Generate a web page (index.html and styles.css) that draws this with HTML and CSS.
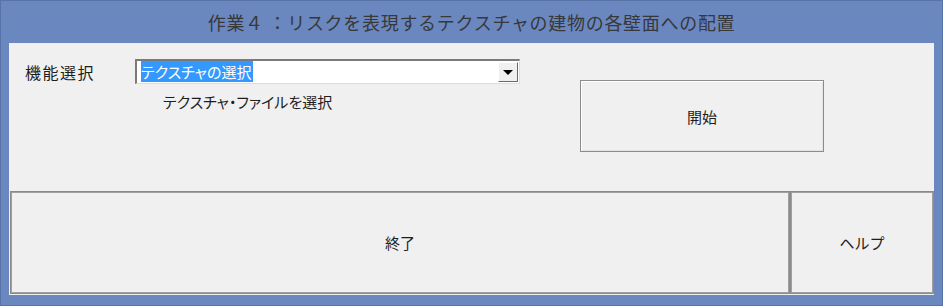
FILE: index.html
```html
<!DOCTYPE html>
<html lang="ja">
<head>
  <meta charset="UTF-8">
  <title>作業４：リスクを表現するテクスチャの建物の各壁面への配置</title>
  <link rel="stylesheet" href="styles.css">
</head>
<body>
  <div class="window">
    <div class="titlebar">作業４ ：リスクを表現するテクスチャの建物の各壁面への配置</div>
    <div class="client">
      <div class="top">
        <div class="form">
          <div class="row">
            <span class="label">機能選択</span>
            <div class="combo">
              <span class="combo-text"><span class="selected">テクスチャの選択</span></span>
              <span class="combo-btn"><span class="arrow"></span></span>
            </div>
          </div>
          <div class="hint">テクスチャ・ファイルを選択</div>
        </div>
        <button class="btn start">開始</button>
      </div>
      <div class="bottom">
        <button class="btn exit">終了</button>
        <button class="btn help">ヘルプ</button>
      </div>
    </div>
  </div>
</body>
</html>
```

FILE: styles.css
```css
body {
  margin: 0;
  background-color: #6a87c0;
  font-family: "Noto Sans CJK JP", "Noto Sans", sans-serif;
  color: #1e1e1e;
}

.window {
  width: 943px;
  height: 306px;
  box-sizing: border-box;
  border: 1px solid #5873a8;
  padding: 0 8px 10px 8px;
  display: flex;
  flex-direction: column;
}

.titlebar {
  height: 42px;
  line-height: 42px;
  text-align: center;
  font-size: 18px;
  color: #383838;
  letter-spacing: 0.7px;
}

.client {
  flex: 1;
  background-color: #f0f0f0;
  display: flex;
  flex-direction: column;
}

.top {
  height: 148px;
  display: flex;
  align-items: flex-start;
}

.form {
  padding: 16px 0 0 16px;
  width: 555px;
}

.row {
  display: flex;
  align-items: center;
}

.label {
  width: 110px;
  font-size: 16px;
  letter-spacing: 1.5px;
}

.combo {
  width: 385px;
  height: 25px;
  box-sizing: border-box;
  background: #fff;
  border-top: 2px solid #7a7a7a;
  border-left: 2px solid #7a7a7a;
  border-right: 1px solid #dcdcdc;
  border-bottom: 1px solid #dcdcdc;
  display: flex;
  align-items: center;
}

.combo-text {
  flex: 1;
  padding-left: 4px;
  font-size: 15px;
  font-feature-settings: "palt";
  line-height: 18px;
}

.selected {
  background-color: #3399ff;
  color: #fff;
  padding-right: 2px;
}

.combo-btn {
  width: 20px;
  height: 20px;
  margin-right: 1px;
  box-sizing: border-box;
  background: #f0f0f0;
  border-right: 1px solid #696969;
  border-bottom: 1px solid #696969;
  border-top: 1px solid #fff;
  border-left: 1px solid #fff;
  display: flex;
  align-items: center;
  justify-content: center;
}

.arrow {
  width: 0;
  height: 0;
  border-left: 5px solid transparent;
  border-right: 5px solid transparent;
  border-top: 5px solid #000;
}

.hint {
  margin: 7px 0 0 138px;
  font-size: 15px;
  font-feature-settings: "palt";
}

.btn {
  font-family: inherit;
  color: #1e1e1e;
  font-size: 15px;
  background-color: #f0f0f0;
  border: 1px solid #8c8c8c;
  box-shadow: inset 1px 1px 0 #fff, inset -1px -1px 0 #e3e3e3;
  padding: 0;
}

.start {
  margin-top: 37px;
  width: 244px;
  height: 72px;
}

.bottom {
  flex: 1;
  display: flex;
  padding: 0 0 1px 1px;
}

.bottom .btn {
  border: 1px solid #8a8a8a;
  box-shadow: inset 1px 1px 0 #a0a0a0, inset -1px -1px 0 #a0a0a0;
}

.exit {
  width: 780px;
}

.help {
  flex: 1;
}
```
